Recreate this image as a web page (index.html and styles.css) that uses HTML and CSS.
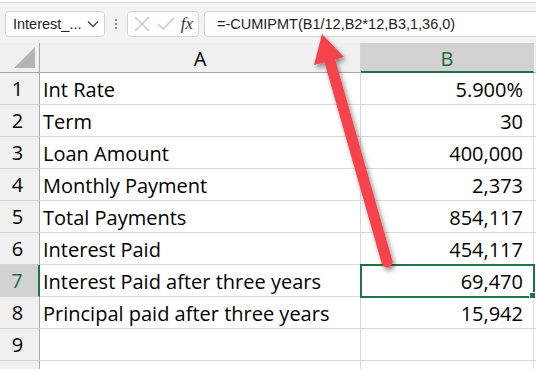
FILE: index.html
```html
<!DOCTYPE html>
<html lang="en">
<head>
    <meta charset="UTF-8">
    <title>CUMIPMT</title>
    <link rel="stylesheet" href="styles.css">
</head>
<body>
    <div class="ribbon-edge"></div>
    <div class="formula-bar">
        <div class="name-box">
            <span>Interest_...</span>
            <svg class="chevron" width="12" height="8" viewBox="0 0 12 8"><path d="M1 1.5 L6 6.5 L11 1.5" fill="none" stroke="#444" stroke-width="1.3"/></svg>
        </div>
        <div class="grip"><i></i><i></i><i></i></div>
        <div class="fx-buttons">
            <svg width="18" height="18" viewBox="0 0 18 18"><path d="M2 2 L16 16 M16 2 L2 16" stroke="#c4c4c4" stroke-width="1.3"/></svg>
            <svg width="20" height="18" viewBox="0 0 20 18"><path d="M2 9 L7 14 L18 3" fill="none" stroke="#c4c4c4" stroke-width="1.3"/></svg>
            <span class="fx">fx</span>
        </div>
        <div class="formula">=-CUMIPMT(B1/12,B2*12,B3,1,36,0)</div>
    </div>

    <div class="sheet">
        <div class="corner"><span class="tri"></span></div>
        <div class="col-head">A</div>
        <div class="col-head active">B</div>
        <div class="col-head"></div>

        <div class="row-head">1</div><div class="cell">Int Rate</div><div class="cell num">5.900%</div><div class="cell"></div>
        <div class="row-head">2</div><div class="cell">Term</div><div class="cell num">30</div><div class="cell"></div>
        <div class="row-head">3</div><div class="cell">Loan Amount</div><div class="cell num">400,000</div><div class="cell"></div>
        <div class="row-head">4</div><div class="cell">Monthly Payment</div><div class="cell num">2,373</div><div class="cell"></div>
        <div class="row-head">5</div><div class="cell">Total Payments</div><div class="cell num">854,117</div><div class="cell"></div>
        <div class="row-head">6</div><div class="cell">Interest Paid</div><div class="cell num">454,117</div><div class="cell"></div>
        <div class="row-head active">7</div><div class="cell">Interest Paid after three years</div><div class="cell num selected">69,470<span class="handle"></span></div><div class="cell"></div>
        <div class="row-head">8</div><div class="cell">Principal paid after three years</div><div class="cell num">15,942</div><div class="cell"></div>
        <div class="row-head">9</div><div class="cell"></div><div class="cell"></div><div class="cell"></div>
        <div class="row-head"></div><div class="cell"></div><div class="cell"></div><div class="cell"></div>
    </div>

    <svg class="arrow" width="536" height="369" viewBox="0 0 536 369">
        <defs>
            <filter id="shadow" x="-20%" y="-20%" width="140%" height="140%">
                <feDropShadow dx="2" dy="3" stdDeviation="2.5" flood-color="#000" flood-opacity="0.45"/>
            </filter>
        </defs>
        <g filter="url(#shadow)" fill="#f5424b">
            <line x1="387" y1="262" x2="329" y2="58" stroke="#f5424b" stroke-width="11" stroke-linecap="round"/>
            <polygon points="322,34 344,57 314,65"/>
        </g>
    </svg>
</body>
</html>
```

FILE: styles.css
```css
body {
    margin: 0;
    width: 536px;
    height: 369px;
    overflow: hidden;
    position: relative;
    background: #f3f3f3;
    font-family: 'Liberation Sans', Arial, sans-serif;
}
.ribbon-edge {
    height: 2px;
    background: #fff;
    border-bottom: 1px solid #d6d6d6;
}
.formula-bar {
    display: flex;
    align-items: center;
    height: 25px;
    padding: 8px 0 7px 5px;
}
.name-box {
    width: 86px;
    height: 24px;
    display: flex;
    align-items: center;
    justify-content: space-between;
    padding: 0 5px 0 7px;
    background: #fff;
    border: 1px solid #d4d4d4;
    border-radius: 4px;
    font-size: 14.5px;
    color: #222;
}
.grip {
    width: 22px;
    display: flex;
    flex-direction: column;
    align-items: center;
    gap: 2px;
}
.grip i {
    width: 2px;
    height: 2px;
    background: #8a8a8a;
}
.fx-buttons {
    width: 72px;
    height: 26px;
    display: flex;
    align-items: center;
    justify-content: space-between;
    padding: 0 4px 0 5px;
    box-sizing: border-box;
    background: #fff;
    border: 1px solid #d4d4d4;
    border-radius: 4px;
}
.fx {
    font-family: 'Liberation Serif', serif;
    font-style: italic;
    font-size: 17px;
    color: #333;
    padding-right: 1px;
}
.formula {
    flex: 1;
    height: 24px;
    margin-left: 5px;
    padding-left: 12px;
    line-height: 24px;
    background: #fff;
    border: 1px solid #d4d4d4;
    border-right: none;
    border-radius: 4px 0 0 4px;
    font-size: 14.5px;
    color: #222;
}
.sheet {
    display: grid;
    grid-template-columns: 40px 321px 173px 20px;
    grid-template-rows: 30px repeat(10, 32px);
    background: #fff;
    font-family: 'Open Sans', 'Liberation Sans', sans-serif;
    font-size: 20px;
    color: #000;
}
.corner {
    background: #f0f0f0;
    border-right: 1px solid #a8a8a8;
    border-bottom: 1px solid #a8a8a8;
    position: relative;
}
.tri {
    position: absolute;
    left: 14px;
    bottom: 4px;
    width: 0;
    height: 0;
    border-left: 21px solid transparent;
    border-bottom: 21px solid #b4b4b4;
}
.col-head {
    background: #f0f0f0;
    border-right: 1px solid #d4d4d4;
    border-bottom: 1px solid #a8a8a8;
    display: flex;
    align-items: center;
    justify-content: center;
    padding-top: 2px;
    font-size: 20px;
}
.col-head.active {
    background: #d2d2d2;
    border-bottom: 2px solid #217346;
    color: #1e6b3f;
}
.row-head {
    background: #f0f0f0;
    border-right: 1px solid #a8a8a8;
    border-bottom: 1px solid #d4d4d4;
    display: flex;
    align-items: center;
    justify-content: center;
    padding-right: 4px;
    font-size: 20px;
}
.row-head.active {
    background: #d2d2d2;
    border-right: 2px solid #217346;
    color: #1e6b3f;
}
.cell {
    border-right: 1px solid #d9d9d9;
    border-bottom: 1px solid #d9d9d9;
    display: flex;
    align-items: center;
    padding-left: 3px;
    padding-top: 2px;
    white-space: nowrap;
}
.cell.num {
    justify-content: flex-end;
    padding-right: 10px;
}
.cell.selected {
    position: relative;
    outline: 2px solid #217346;
    outline-offset: -1px;
}
.handle {
    position: absolute;
    right: -3px;
    bottom: -3px;
    width: 5px;
    height: 5px;
    background: #217346;
    border: 1px solid #fff;
}
.arrow {
    position: absolute;
    left: 0;
    top: 0;
    pointer-events: none;
}
```
